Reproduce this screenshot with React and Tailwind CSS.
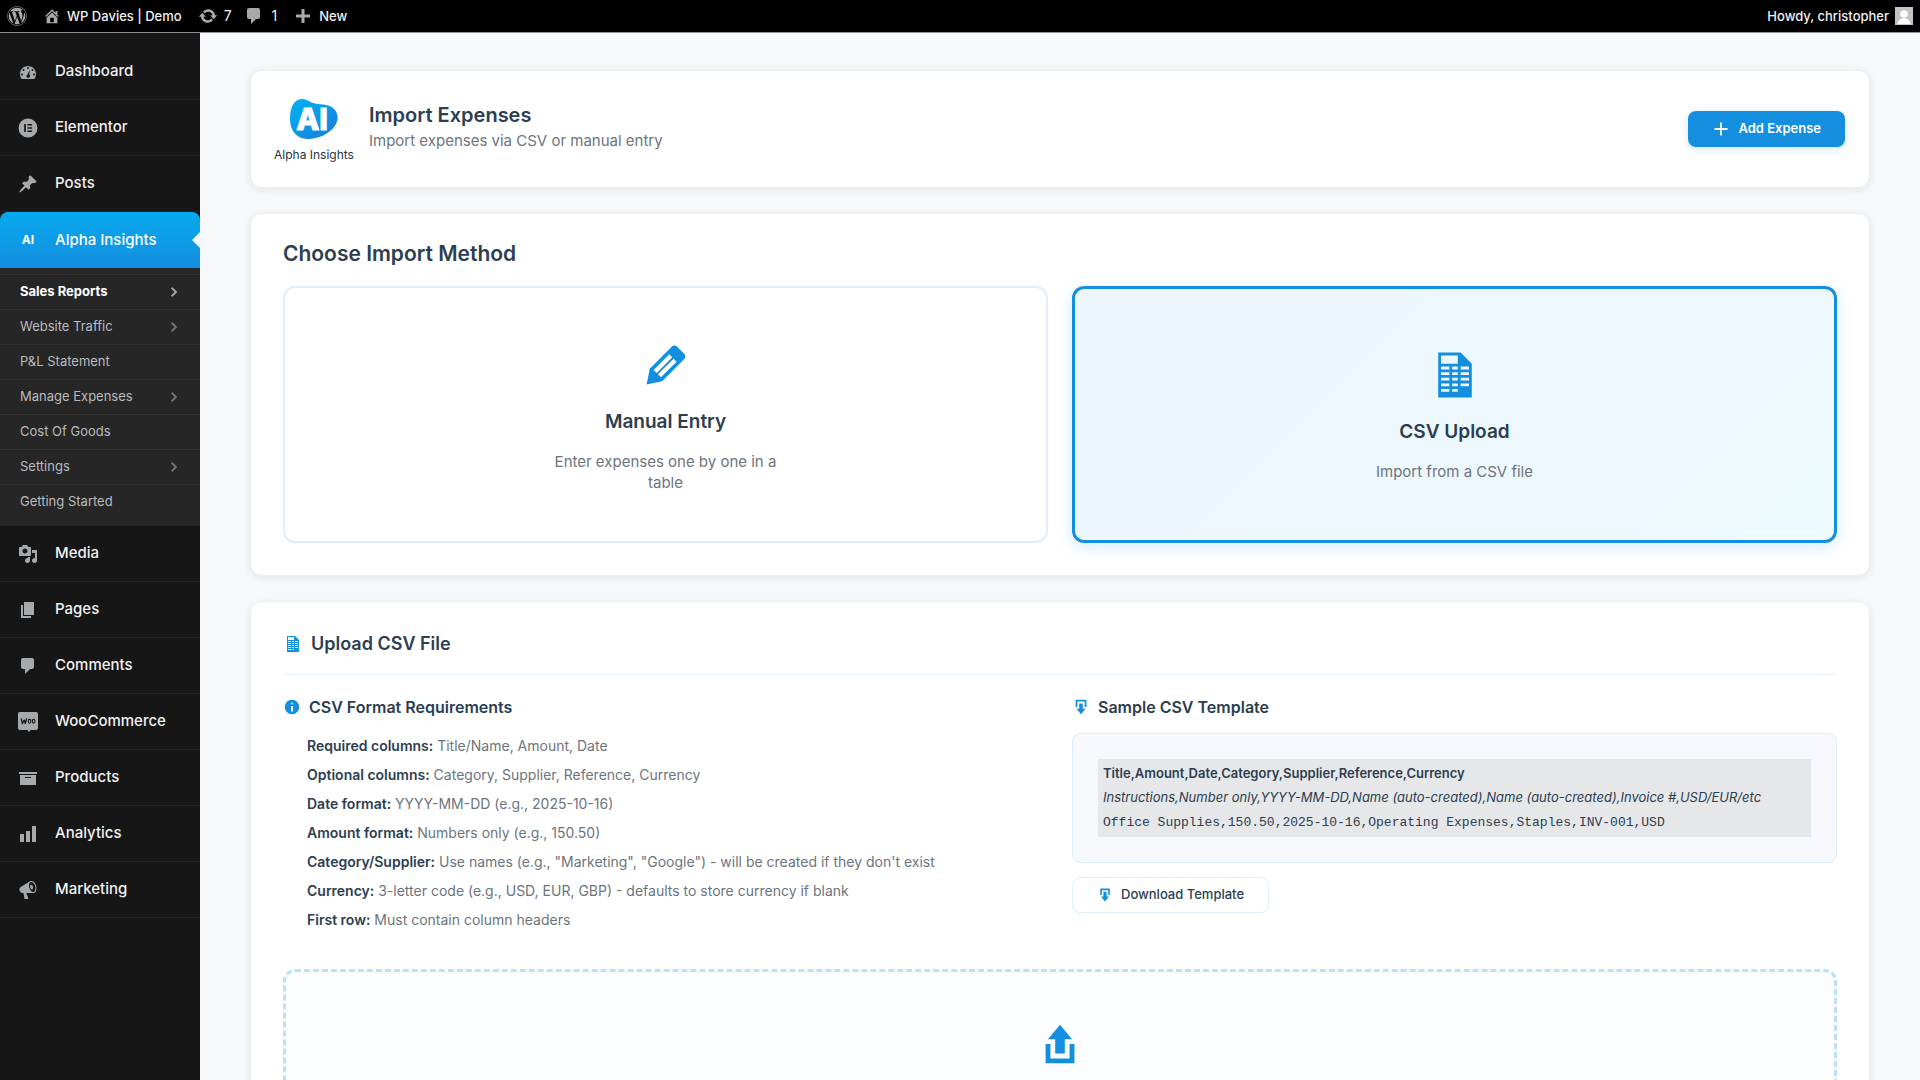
import React from "react";
import { FaWordpress } from "react-icons/fa";

const PATHS = {
  home: "M16 8.5l1.53 1.53-1.06 1.06L10 4.6l-6.47 6.49-1.06-1.06L10 2.5l4 4v-2h2v4zm-6-2.46l6 5.99V18H4v-5.97zM12 17v-5H8v5h4z",
  update: "M10.2 3.28c3.53 0 6.43 2.61 6.92 6h2.08l-3.5 4-3.5-4h2.32c-.45-1.97-2.21-3.45-4.32-3.45-1.45 0-2.73.71-3.54 1.78L4.95 5.66C6.23 4.2 8.11 3.28 10.2 3.28zm-.4 13.44c-3.52 0-6.43-2.61-6.92-6H.8l3.5-4c1.17 1.33 2.33 2.67 3.5 4H5.48c.45 1.97 2.21 3.45 4.32 3.45 1.45 0 2.73-.71 3.54-1.78l1.71 1.95c-1.28 1.46-3.15 2.38-5.25 2.38z",
  comment: "M5 2h9c1.1 0 2 .9 2 2v7c0 1.1-.9 2-2 2h-2l-5 5v-5H5c-1.1 0-2-.9-2-2V4c0-1.1.9-2 2-2z",
  plus: "M17 8.5v3h-5.5V17h-3v-5.5H3v-3h5.5V3h3v5.500z",
  dashboard: "M3.76 17h12.48c1.1-1.37 1.76-3.11 1.76-5 0-4.42-3.58-8-8-8s-8 3.58-8 8c0 1.89.66 3.63 1.76 5zM10 5a1 1 0 110 2 1 1 0 010-2zM5.5 7a1 1 0 110 2 1 1 0 010-2zM14.5 7a1 1 0 110 2 1 1 0 010-2zM4 11.5a1 1 0 110 2 1 1 0 010-2zM16 11.5a1 1 0 110 2 1 1 0 010-2zM11.7 7.6l-.3 5.2c.5.4.7 1 .6 1.6-.2 1-1.100 1.600-2.100 1.400s-1.600-1.100-1.400-2.100c.1-.6.5-1.100 1.100-1.300z",
  pin: "M10.44 3.02l1.82-1.82 6.36 6.35-1.83 1.82c-1.05-.68-2.48-.57-3.41.36l-.75.75c-.92.93-1.04 2.35-.35 3.41l-1.83 1.82-2.41-2.41-2.8 2.79c-.42.42-3.38 2.71-3.8 2.29s1.86-3.39 2.28-3.81l2.79-2.79L4.1 9.36l1.83-1.82c1.05.69 2.48.57 3.4-.36l.75-.75c.93-.92 1.05-2.35.36-3.41z",
  media: "M13 11V4c0-.55-.45-1-1-1h-1.67L9 1H5L3.67 3H2c-.55 0-1 .45-1 1v7c0 .55.45 1 1 1h10c.55 0 1-.45 1-1zM7 4.5c1.38 0 2.5 1.12 2.5 2.5S8.38 9.5 7 9.5 4.5 8.38 4.5 7 5.62 4.5 7 4.5zM14 6h5v10.5c0 1.38-1.12 2.5-2.5 2.5S14 17.88 14 16.5s1.12-2.5 2.5-2.5c.17 0 .34.02.5.05V9h-3V6zm-4 8.05V13h2v3.5c0 1.38-1.12 2.5-2.5 2.5S7 17.88 7 16.5 8.12 14 9.5 14c.17 0 .34.02.5.05z",
  page: "M6 15V2h10v13H6zm-1 1h8v2H3V5h2v11z",
  archive: "M19 4v2H1V4h18zM2 7h16v10H2V7zm11 3V9H7v1h6z",
  chart: "M18 18V2h-4v16h4zm-6 0V7H8v11h4zm-6 0v-8H2v8h4z",
  megaphone: "M18.15 5.94c.46 1.62.38 3.22-.02 4.48-.42 1.28-1.26 2.18-2.3 2.48-.16.06-.26.06-.4.06-.06.02-.12.02-.18.02-.06.02-.14.02-.22.02h-6.8l2.22 5.5c.02.14-.06.26-.14.34-.08.1-.24.16-.34.16H6.95c-.1 0-.26-.06-.34-.16-.08-.08-.16-.2-.14-.34l-1-5.5H4.25l-.02-.02c-.5.06-1.08-.18-1.54-.62s-.88-1.08-1.06-1.88c-.24-.8-.2-1.56-.02-2.2.18-.62.58-1.08 1.06-1.3l.02-.02 9-5.4c.1-.06.18-.1.24-.16.06-.04.14-.08.24-.12.16-.08.28-.12.5-.18 1.04-.3 2.24.1 3.22.98s1.84 2.24 2.26 3.86zm-2.58 5.98h-.02c.4-.1.74-.34 1.04-.7.58-.7.86-1.76.86-3.04 0-.64-.1-1.3-.28-1.98-.34-1.36-1.02-2.5-1.78-3.24s-1.68-1.1-2.46-.88c-.82.22-1.4.96-1.7 2-.32 1.04-.28 2.36.06 3.72.38 1.36 1 2.5 1.8 3.24.78.74 1.62 1.1 2.48.88zm-2.54-7.08c.22-.04.42-.02.62.04.38.16.76.48 1.02 1s.42 1.2.42 1.78c0 .3-.04.56-.12.8-.18.48-.44.84-.86.94-.34.1-.8-.06-1.14-.4s-.64-.86-.78-1.5c-.18-.62-.12-1.24.02-1.72s.48-.84.82-.94z",
  elementor: "M10 .5a9.500 9.500 0 100 19 9.500 9.500 0 000-19zM6.200 6h1.700v8H6.200zM9.500 6h4.600v1.600H9.500zM9.500 9.200h4.600v1.600H9.500zM9.500 12.400h4.600V14H9.500z",
  edit: "M13.89 3.39l2.71 2.72c.46.46.42 1.24.03 1.64l-8.01 8.02-5.56 1.16 1.16-5.58s7.6-7.63 7.99-8.03c.39-.39 1.22-.39 1.68.07zm-2.73 2.79l-5.59 5.61 1.11 1.11 5.54-5.65zm-2.97 8.23l5.58-5.6-1.07-1.08-5.59 5.6z",
  sheet: "M12 2l4 4v12H4V2h8zM5 3v3h6V3zM5 7v1h3V7zM9 7v1h2V7zM12 7v1h3V7zM5 9v1h3V9zM9 9v1h2V9zM12 9v1h3V9zM5 11v1h3v-1zM9 11v1h2v-1zM12 11v1h3v-1zM5 13v1h3v-1zM9 13v1h2v-1zM12 13v1h3v-1zM5 15v1h3v-1zM9 15v1h2v-1z",
  upload: "M8 14V8H5l5-6 5 6h-3v6H8zm-2 2v-6H4v8h12.01v-8H14v6H6z",
  download: "M14.01 4v6h2V2H4v8h2.01V4h8zm-2 2v6h3l-5 6-5-6h3V6h4z",
  info: "M10 2c4.42 0 8 3.58 8 8s-3.58 8-8 8-8-3.58-8-8 3.58-8 8-8zm1 4c0-.55-.45-1-1-1s-1 .45-1 1 .45 1 1 1 1-.45 1-1zm0 9V9H9v6h2z",
  chevron: "M5 16l6-6-6-6 2-2.500 8.500 8.500L7 18.500z",
};

function Icon({ name, className = "size-5" }) {
  return (
    <svg viewBox="0 0 20 20" fill="currentColor" aria-hidden="true" className={`shrink-0 ${className}`}>
      <path fillRule="evenodd" d={PATHS[name]} />
    </svg>
  );
}

function WooIcon() {
  return (
    <svg viewBox="0 0 20 20" aria-hidden="true" className="size-5 shrink-0">
      <path fill="#a7aaad" d="M2 0h16a2 2 0 012 2v14a2 2 0 01-2 2h-5.500l-1.500 2-1.500-2H2a2 2 0 01-2-2V2a2 2 0 012-2z" />
      <path fill="none" stroke="#161616" strokeWidth="1.300" strokeLinejoin="round" strokeLinecap="round" d="M3.300 6.800l1.100 4.700 1.900-3.400 1 3.400 1.300-4.700" />
      <ellipse cx="11.600" cy="9.300" rx="1.300" ry="1.900" fill="none" stroke="#161616" strokeWidth="1.100" />
      <ellipse cx="15.600" cy="9.300" rx="1.300" ry="1.900" fill="none" stroke="#161616" strokeWidth="1.100" />
    </svg>
  );
}

function AdminBar() {
  return (
    <header className="flex h-[33px] shrink-0 items-center justify-between border-b border-[#8f9194] bg-black px-[7px] text-sm text-[#f0f0f1]">
      <nav className="flex items-center">
        <a href="#wp" aria-label="WordPress" className="text-[#a7aaad]">
          <FaWordpress className="size-5" />
        </a>
        <a href="#site" className="ml-4 flex items-center gap-1.5">
          <Icon name="home" className="size-[18px] text-[#a7aaad]" />
          <span className="text-[13px] font-medium">WP Davies | Demo</span>
        </a>
        <a href="#updates" className="ml-4 flex items-center gap-1.5">
          <Icon name="update" className="size-5 text-[#a7aaad]" />7
        </a>
        <a href="#comments" className="ml-3 flex items-center gap-2">
          <Icon name="comment" className="size-5 text-[#a7aaad]" />1
        </a>
        <a href="#new" className="ml-4 flex items-center gap-1.5">
          <Icon name="plus" className="size-5 text-[#a7aaad]" />
          <span className="text-[13px] font-medium">New</span>
        </a>
      </nav>
      <a href="#profile" className="flex items-center gap-1.5">
        <span className="text-[13px] font-medium">Howdy, christopher</span>
        <svg viewBox="0 0 18 18" aria-hidden="true" className="size-[18px]">
          <rect width="18" height="18" fill="#c3c4c9" />
          <circle cx="9" cy="7" r="3.800" fill="#fff" />
          <path fill="#fff" d="M2.500 17c.5-3.500 2.500-4.500 4.500-5.500h4c2 1 4 2 4.500 5.500z" />
        </svg>
      </a>
    </header>
  );
}

function MenuItem({ icon, label }) {
  return (
    <a href={`#${label}`} className="flex h-14 items-center gap-[17px] border-b border-[#242424] px-[18px] text-[15px] font-medium text-[#f0f0f1]">
      {icon === "woo" ? <WooIcon /> : <Icon name={icon} className="size-5 text-[#a7aaad]" />}
      {label}
    </a>
  );
}

const SUBMENU = [
  ["Sales Reports", true],
  ["Website Traffic", true],
  ["P&L Statement", false],
  ["Manage Expenses", true],
  ["Cost Of Goods", false],
  ["Settings", true],
  ["Getting Started", false],
];

function Sidebar() {
  return (
    <aside className="w-[200px] shrink-0 bg-[#161616] pt-[11px]">
      <nav>
        <MenuItem icon="dashboard" label="Dashboard" />
        <MenuItem icon="elementor" label="Elementor" />
        <MenuItem icon="pin" label="Posts" />
        <a href="#alpha" className="relative flex h-14 items-center gap-[17px] rounded-t-lg bg-linear-to-b from-[#06a9ee] to-[#148fe0] px-[18px] text-[15px] font-medium text-white">
          <span className="w-5 text-center text-xs font-bold">AI</span>
          Alpha Insights
          <svg viewBox="0 0 8 16" aria-hidden="true" className="absolute top-5 right-0 h-4 w-2">
            <path d="M8 0v16L0 8z" fill="#f7f8fa" />
          </svg>
        </a>
        <ul className="bg-[#262626] pt-[6px] pb-[7px]">
          {SUBMENU.map(([label, more], i) => (
            <li key={label}>
              <a
                href={`#${label}`}
                className={`flex h-[35px] items-center justify-between border-t border-[#323232] px-5 text-[13px] ${
                  i === 0 ? "font-bold text-white" : "text-[#b9bbbe]"
                }`}
              >
                {label}
                {more && <Icon name="chevron" className={`size-3 ${i === 0 ? "text-[#a7aaad]" : "text-[#76787b]"}`} />}
              </a>
            </li>
          ))}
        </ul>
        <MenuItem icon="media" label="Media" />
        <MenuItem icon="page" label="Pages" />
        <MenuItem icon="comment" label="Comments" />
        <MenuItem icon="woo" label="WooCommerce" />
        <MenuItem icon="archive" label="Products" />
        <MenuItem icon="chart" label="Analytics" />
        <MenuItem icon="megaphone" label="Marketing" />
      </nav>
    </aside>
  );
}

function Logo() {
  return (
    <div className="flex w-[78px] flex-col items-center gap-2 pt-1">
      <svg viewBox="0 0 48 40" role="img" aria-label="AI" className="h-10 w-12">
        <defs>
          <linearGradient id="blob" x1="0" y1="0" x2="1" y2="1">
            <stop offset="0" stopColor="#00b4f5" />
            <stop offset="1" stopColor="#1a7bd8" />
          </linearGradient>
        </defs>
        <path fill="url(#blob)" d="M12 0c5 0 7 3 13 4.500C32 6 38 5 43 9c6 5 6 13 1 19-5 7-16 12-26 12C6 40 0 31 0 20 0 10 3 0 12 0z" />
        <text x="22" y="31" textAnchor="middle" fill="#fff" stroke="#fff" strokeWidth="1" fontSize="30" fontWeight="800" fontFamily="Inter, sans-serif">AI</text>
      </svg>
      <span className="text-xs leading-4 whitespace-nowrap text-[#2c3338]">Alpha Insights</span>
    </div>
  );
}

function Card({ className = "", children }) {
  return (
    <section className={`rounded-xl border border-[#e8f1f8] bg-white shadow-[0_2px_8px_rgba(0,0,0,0.08)] ${className}`}>
      {children}
    </section>
  );
}

function Method({ icon, title, text, selected }) {
  return (
    <button
      type="button"
      aria-pressed={selected}
      className={`flex h-[257px] flex-col items-center justify-center rounded-xl ${
        selected
          ? "border-3 border-[#148fe0] bg-linear-135 from-[#edf5fd] to-[#edfafe] shadow-[0_4px_16px_rgba(20,143,224,0.18)]"
          : "border-2 border-[#dfeefa] bg-white"
      }`}
    >
      <Icon name={icon} className="size-14 text-[#148fe0]" />
      <span className="mt-4 text-[19px] leading-[26px] font-semibold text-[#2c3e50]">{title}</span>
      <span className="mt-4 max-w-[230px] text-[15px] leading-[21px] text-[#6c757d]">{text}</span>
    </button>
  );
}

const REQUIREMENTS = [
  ["Required columns:", "Title/Name, Amount, Date"],
  ["Optional columns:", "Category, Supplier, Reference, Currency"],
  ["Date format:", "YYYY-MM-DD (e.g., 2025-10-16)"],
  ["Amount format:", "Numbers only (e.g., 150.50)"],
  ["Category/Supplier:", 'Use names (e.g., "Marketing", "Google") - will be created if they don\'t exist'],
  ["Currency:", "3-letter code (e.g., USD, EUR, GBP) - defaults to store currency if blank"],
  ["First row:", "Must contain column headers"],
];

export default function App() {
  return (
    <div className="flex h-screen flex-col overflow-hidden font-[Inter,sans-serif]">
      <AdminBar />
      <div className="flex min-h-0 flex-1">
        <Sidebar />
        <main className="flex flex-1 flex-col gap-[25px] overflow-y-auto bg-[#f7f8fa] px-[50px] pt-[37px] [scrollbar-width:none]">
          <Card className="flex h-[118px] shrink-0 items-center px-6">
            <Logo />
            <div className="ml-4 flex-1 pb-1">
              <h1 className="text-xl leading-7 font-semibold text-[#2c3e50]">Import Expenses</h1>
              <p className="text-[15px] leading-6 text-[#6c757d]">Import expenses via CSV or manual entry</p>
            </div>
            <button type="button" className="flex h-9 items-center gap-2 rounded-lg bg-[#148fe0] px-6 text-[13px] font-semibold text-white shadow-[0_2px_8px_rgba(20,143,224,0.2)]">
              <svg viewBox="0 0 18 18" aria-hidden="true" className="size-[18px]">
                <path d="M9 2.500v13M2.500 9h13" stroke="currentColor" strokeWidth="1.800" />
              </svg>
              Add Expense
            </button>
          </Card>

          <Card className="shrink-0 px-8 pt-6 pb-8">
            <h2 className="text-[21px] leading-8 font-semibold text-[#2c3e50]">Choose Import Method</h2>
            <div className="mt-4 grid grid-cols-2 gap-6">
              <Method icon="edit" title="Manual Entry" text="Enter expenses one by one in a table" selected={false} />
              <Method icon="sheet" title="CSV Upload" text="Import from a CSV file" selected />
            </div>
          </Card>

          <Card className="shrink-0 px-8 pt-[26px] pb-8">
            <h2 className="flex items-center gap-2 border-b border-[#e8f1f8] pb-[14px] text-lg leading-8 font-semibold text-[#2c3e50]">
              <Icon name="sheet" className="size-5 text-[#148fe0]" />
              Upload CSV File
            </h2>
            <div className="grid grid-cols-2 gap-6 pt-5">
              <div>
                <h3 className="flex items-center gap-2 text-base leading-6 font-semibold text-[#2c3e50]">
                  <Icon name="info" className="size-[18px] text-[#148fe0]" />
                  CSV Format Requirements
                </h3>
                <ul className="mt-3 pl-6 text-sm leading-[29px] text-[#6c757d]">
                  {REQUIREMENTS.map(([name, text]) => (
                    <li key={name}>
                      <strong className="font-semibold text-[#2c3e50]">{name}</strong> {text}
                    </li>
                  ))}
                </ul>
              </div>
              <div>
                <h3 className="flex items-center gap-2 text-base leading-6 font-semibold text-[#2c3e50]">
                  <Icon name="download" className="size-[18px] text-[#148fe0]" />
                  Sample CSV Template
                </h3>
                <div className="mt-[14px] rounded-lg border border-[#dfeefa] bg-[#f7f8fb] p-[25px]">
                  <code className="block bg-[#e6e7e9] px-[5px] py-0.5 font-[Inter,sans-serif] text-[13px] leading-6 text-[#2c3e50]">
                    <strong className="font-semibold">Title,Amount,Date,Category,Supplier,Reference,Currency</strong>
                    <br />
                    <em>Instructions,Number only,YYYY-MM-DD,Name (auto-created),Name (auto-created),Invoice #,USD/EUR/etc</em>
                    <br />
                    <span className="font-['Liberation_Mono',monospace]">
                      Office Supplies,150.50,2025-10-16,Operating Expenses,Staples,INV-001,USD
                    </span>
                  </code>
                </div>
                <button type="button" className="mt-[14px] flex h-9 items-center gap-2 rounded-lg border border-[#dfeefa] bg-white px-6 text-[13px] font-medium text-[#2c3e50]">
                  <Icon name="download" className="size-4 text-[#148fe0]" />
                  Download Template
                </button>
              </div>
            </div>
            <div className="mt-[35px] flex flex-col items-center rounded-xl border-3 border-dashed border-[#bde0f6] bg-[#fbfdff] py-12">
              <Icon name="upload" className="size-12 text-[#148fe0]" />
            </div>
          </Card>
        </main>
      </div>
    </div>
  );
}
